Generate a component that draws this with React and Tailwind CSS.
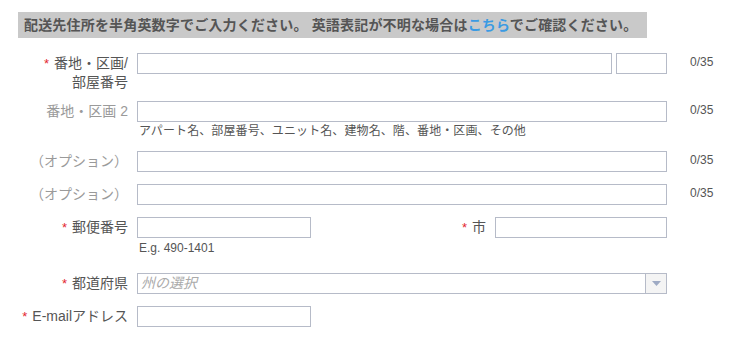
import React from "react";

const font = { fontFamily: '"Liberation Sans", "Noto Sans CJK JP", sans-serif' };

function Star() {
  return <span className="text-[13px] text-[#e3262e] mr-[5px]">*</span>;
}

function Field({ className = "" }) {
  return (
    <input
      type="text"
      className={`h-[21px] border border-[#b6bbc8] bg-white outline-none ${className}`}
    />
  );
}

function Label({ required, muted, children }) {
  return (
    <div
      className={`w-[128px] shrink-0 text-right text-[14px] leading-[18px] pt-[1px] ${
        muted ? "text-[#9a9a9a]" : "text-[#555]"
      }`}
    >
      {required && <Star />}
      {children}
    </div>
  );
}

function Count() {
  return <div className="ml-[23px] text-[12px] leading-[16px] pt-[1px] text-[#555]">0/35</div>;
}

export default function App() {
  return (
    <div className="w-[747px] h-[339px] bg-white pt-[12px] pl-[18px]" style={font}>
      <div className="w-[629px] h-[26px] bg-[#c9c9c9] pl-[6px] text-[14px] leading-[26px] font-bold tracking-[0.18px] text-[#555]">
        配送先住所を半角英数字でご入力ください。 英語表記が不明な場合は
        <span className="text-[#3b9be3]">こちら</span>
        でご確認ください。
      </div>

      <div className="-ml-[18px] mt-[15px]">
        {/* 番地・区画/部屋番号 */}
        <div className="flex items-start h-[48px]">
          <Label required>
            番地・区画/
            <br />
            部屋番号
          </Label>
          <div className="ml-[9px] flex gap-[4px]">
            <Field className="w-[475px]" />
            <Field className="w-[51px]" />
          </div>
          <Count />
        </div>

        {/* 番地・区画 2 */}
        <div className="flex items-start h-[50px]">
          <Label muted>番地・区画 2</Label>
          <div className="ml-[9px] w-[530px]">
            <Field className="w-[530px] block" />
            <div className="pl-[2px] mt-[2px] text-[12px] leading-[14px] tracking-[0.1px] text-[#555]">
              アパート名、部屋番号、ユニット名、建物名、階、番地・区画、その他
            </div>
          </div>
          <Count />
        </div>

        {/* オプション */}
        <div className="flex items-start h-[33px]">
          <Label muted>（オプション）</Label>
          <div className="ml-[9px]">
            <Field className="w-[530px] block" />
          </div>
          <Count />
        </div>
        <div className="flex items-start h-[33px]">
          <Label muted>（オプション）</Label>
          <div className="ml-[9px]">
            <Field className="w-[530px] block" />
          </div>
          <Count />
        </div>

        {/* 郵便番号 / 市 */}
        <div className="flex items-start h-[56px]">
          <Label required>郵便番号</Label>
          <div className="ml-[9px] w-[174px]">
            <Field className="w-[174px] block" />
            <div className="pl-[2px] mt-[3px] text-[12px] leading-[14px] text-[#555]">E.g. 490-1401</div>
          </div>
          <div className="flex-1 max-w-[175px] text-right text-[14px] leading-[18px] pt-[1px] text-[#555]">
            <Star />市
          </div>
          <div className="ml-[9px]">
            <Field className="w-[172px] block" />
          </div>
        </div>

        {/* 都道府県 */}
        <div className="flex items-start h-[33px]">
          <Label required>都道府県</Label>
          <div className="ml-[9px] w-[530px] h-[21px] border border-[#b6bbc8] flex">
            <div className="flex-1 pl-[3px] text-[14px] leading-[19px] italic text-[#aaa]">州の選択</div>
            <div className="w-[21px] border-l border-[#b6bbc8] bg-[#f4f4f4] flex items-center justify-center">
              <svg width="9" height="5" viewBox="0 0 9 5">
                <path d="M0 0 H9 L4.5 5 Z" fill="#9eaac4" />
              </svg>
            </div>
          </div>
        </div>

        {/* E-mail */}
        <div className="flex items-start h-[33px]">
          <Label required>E-mailアドレス</Label>
          <div className="ml-[9px]">
            <Field className="w-[174px] block" />
          </div>
        </div>
      </div>
    </div>
  );
}
